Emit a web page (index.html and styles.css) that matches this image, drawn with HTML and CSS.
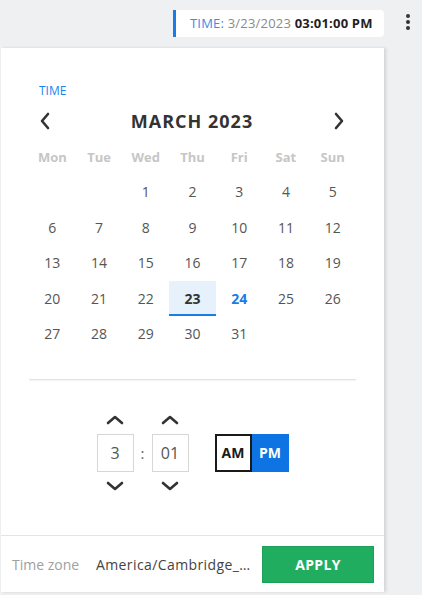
FILE: index.html
```html
<!DOCTYPE html>
<html>
<head>
<meta charset="utf-8">
<link rel="stylesheet" href="styles.css">
</head>
<body>
<div class="topbar">
  <div class="pill"><span class="pill-label">TIME:</span> <span class="pill-date">3/23/2023</span> <b class="pill-time">03:01:00 PM</b></div>
  <div class="kebab"><span></span><span></span><span></span></div>
</div>
<div class="panel">
  <div class="label">TIME</div>
  <div class="nav">
    <button class="navbtn"><svg width="12" height="18" viewBox="0 0 12 18"><path d="M9 2 L3 9 L9 16" fill="none" stroke="#333" stroke-width="2.6" stroke-linecap="round" stroke-linejoin="round"/></svg></button>
    <div class="month">MARCH 2023</div>
    <button class="navbtn"><svg width="12" height="18" viewBox="0 0 12 18"><path d="M3 2 L9 9 L3 16" fill="none" stroke="#333" stroke-width="2.6" stroke-linecap="round" stroke-linejoin="round"/></svg></button>
  </div>
  <div class="grid">
    <div class="dh">Mon</div><div class="dh">Tue</div><div class="dh">Wed</div><div class="dh">Thu</div><div class="dh">Fri</div><div class="dh">Sat</div><div class="dh">Sun</div>
    <div class="d"></div><div class="d"></div><div class="d">1</div><div class="d">2</div><div class="d">3</div><div class="d">4</div><div class="d">5</div>
    <div class="d">6</div><div class="d">7</div><div class="d">8</div><div class="d">9</div><div class="d">10</div><div class="d">11</div><div class="d">12</div>
    <div class="d">13</div><div class="d">14</div><div class="d">15</div><div class="d">16</div><div class="d">17</div><div class="d">18</div><div class="d">19</div>
    <div class="d">20</div><div class="d">21</div><div class="d">22</div><div class="d sel">23</div><div class="d today">24</div><div class="d">25</div><div class="d">26</div>
    <div class="d">27</div><div class="d">28</div><div class="d">29</div><div class="d">30</div><div class="d">31</div><div class="d"></div><div class="d"></div>
  </div>
  <div class="divider"></div>
  <div class="timepick">
    <div class="spin">
      <button class="arrow"><svg width="18" height="10" viewBox="0 0 18 10"><path d="M2 8 L9 2 L16 8" fill="none" stroke="#333" stroke-width="2.6" stroke-linecap="round" stroke-linejoin="round"/></svg></button>
      <div class="box">3</div>
      <button class="arrow"><svg width="18" height="10" viewBox="0 0 18 10"><path d="M2 2 L9 8 L16 2" fill="none" stroke="#333" stroke-width="2.6" stroke-linecap="round" stroke-linejoin="round"/></svg></button>
    </div>
    <div class="colon">:</div>
    <div class="spin">
      <button class="arrow"><svg width="18" height="10" viewBox="0 0 18 10"><path d="M2 8 L9 2 L16 8" fill="none" stroke="#333" stroke-width="2.6" stroke-linecap="round" stroke-linejoin="round"/></svg></button>
      <div class="box">01</div>
      <button class="arrow"><svg width="18" height="10" viewBox="0 0 18 10"><path d="M2 2 L9 8 L16 2" fill="none" stroke="#333" stroke-width="2.6" stroke-linecap="round" stroke-linejoin="round"/></svg></button>
    </div>
    <div class="ampm">
      <div class="am">AM</div>
      <div class="pm">PM</div>
    </div>
  </div>
  <div class="footer">
    <span class="tzlabel">Time zone</span>
    <span class="tz">America/Cambridge_Bay</span>
    <button class="apply">APPLY</button>
  </div>
</div>
</body>
</html>
```
FILE: styles.css
```css
* { box-sizing: border-box; }
body {
  margin: 0;
  background: #eff0f2;
  font-family: "Open Sans", "Noto Sans", sans-serif;
  color: #3a3a3a;
  width: 422px;
  height: 595px;
  overflow: hidden;
}
button {
  font-family: inherit;
  border: none;
  background: none;
  padding: 0;
  cursor: pointer;
}
.topbar {
  height: 48px;
  display: flex;
  align-items: flex-start;
  padding-top: 10px;
  padding-left: 173px;
}
.pill {
  width: 211px;
  height: 27px;
  background: #fff;
  border-left: 3px solid #1a7ce8;
  border-radius: 0 4px 4px 0;
  font-size: 13px;
  letter-spacing: 0.2px;
  line-height: 27px;
  padding-left: 14px;
  white-space: nowrap;
  overflow: hidden;
}
.pill-label { color: #3d8ce6; }
.pill-date { color: #8a8a8a; }
.pill-time { color: #1f1f1f; font-weight: 700; }
.kebab {
  margin-left: 22px;
  margin-top: 4px;
  display: flex;
  flex-direction: column;
  gap: 2px;
}
.kebab span {
  width: 4px;
  height: 4px;
  border-radius: 50%;
  background: #333;
}
.panel {
  margin-left: 1px;
  width: 383px;
  height: 544px;
  background: #fff;
  box-shadow: 2px 0 3px rgba(0,0,0,0.12);
  display: flex;
  flex-direction: column;
}
.label {
  padding: 35px 0 0 38px;
  color: #1a84f0;
  font-size: 12px;
  line-height: 16px;
  height: 58px;
}
.nav {
  margin: 0 29px 0 28px;
  height: 30px;
  display: flex;
  align-items: center;
  justify-content: space-between;
}
.navbtn {
  width: 32px;
  height: 30px;
  display: flex;
  align-items: center;
  justify-content: center;
}
.month {
  font-weight: 700;
  font-size: 18px;
  letter-spacing: 1px;
  color: #333;
}
.grid {
  margin: 3px 0 0 28px;
  width: 327px;
  display: grid;
  grid-template-columns: repeat(7, 1fr);
  grid-template-rows: 35px repeat(5, 35.5px);
}
.dh {
  display: flex;
  align-items: center;
  justify-content: center;
  font-size: 13px;
  font-weight: 700;
  color: #c6c6c6;
}
.d {
  display: flex;
  align-items: center;
  justify-content: center;
  font-size: 14px;
  color: #555;
}
.d.sel {
  background: #e6f1fc;
  border-bottom: 2px solid #1a7ce8;
  font-weight: 700;
  color: #333;
  padding-top: 2px;
}
.d.today {
  font-weight: 700;
  color: #1a7ce8;
}
.divider {
  margin: 27px 0 0 28px;
  width: 327px;
  height: 1px;
  background: #e2e2e2;
  box-shadow: 0 1px 1px rgba(0,0,0,0.05);
}
.timepick {
  margin-top: 30px;
  display: flex;
  justify-content: center;
  align-items: center;
}
.spin {
  display: flex;
  flex-direction: column;
  align-items: center;
}
.arrow {
  width: 37px;
  height: 20px;
  display: flex;
  align-items: center;
  justify-content: center;
}
.spin .box {
  margin: 4px 0;
  width: 37px;
  height: 38px;
  border: 1px solid #d6d6d6;
  display: flex;
  align-items: center;
  justify-content: center;
  font-size: 16px;
  color: #555;
}
.colon {
  width: 18px;
  text-align: center;
  font-size: 15px;
  color: #666;
}
.ampm {
  margin-left: 26px;
  display: flex;
  height: 38px;
}
.am, .pm {
  width: 37px;
  display: flex;
  align-items: center;
  justify-content: center;
  font-size: 14px;
  font-weight: 700;
}
.am {
  border: 2px solid #1a1a1a;
  color: #1a1a1a;
}
.pm {
  background: #0f74e3;
  color: #fff;
}
.footer {
  margin-top: auto;
  height: 57px;
  border-top: 1px solid #e4e4e4;
  display: flex;
  align-items: center;
  padding: 0 10px 0 11px;
}
.tzlabel {
  font-size: 14px;
  color: #a0a0a0;
  width: 84px;
  flex: none;
}
.tz {
  font-size: 14px;
  letter-spacing: 0.4px;
  color: #444;
  white-space: nowrap;
  overflow: hidden;
  text-overflow: ellipsis;
  flex: 1;
  min-width: 0;
  padding-right: 5px;
}
.apply {
  flex: none;
  width: 112px;
  height: 37px;
  background: #21ad5f;
  color: #fff;
  font-weight: 700;
  font-size: 14px;
  letter-spacing: 0.3px;
  border: 1px solid #1e9f57;
}
```
